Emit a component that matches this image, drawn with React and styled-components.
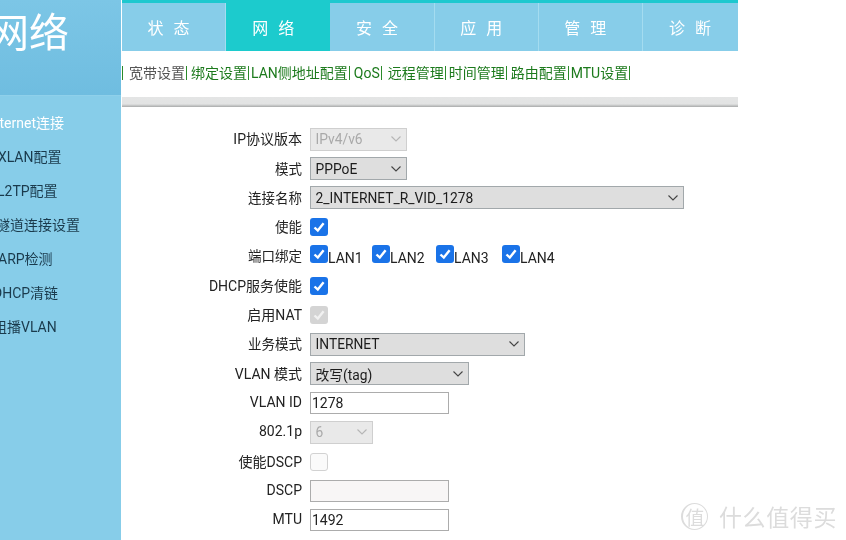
import React from "react"
import styled, { createGlobalStyle } from "styled-components"

const GlobalStyle = createGlobalStyle`
  html, body {
    margin: 0;
    padding: 0;
    background: #fff;
    overflow: hidden;
  }
  body {
    font-family: Roboto, "Noto Sans CJK SC", sans-serif;
  }
`

const Page = styled.div`
  position: relative;
  display: flex;
  width: 846px;
  height: 540px;
  overflow: hidden;
  background: #fff;
  filter: blur(0.3px);
`

const Sidebar = styled.aside`
  flex: 0 0 121px;
  display: flex;
  flex-direction: column;
  background: #87cde9;
  overflow: hidden;
`

const Brand = styled.div`
  height: 96px;
  flex: none;
  box-sizing: border-box;
  padding-top: 3px;
  margin-bottom: 10px;
  background: linear-gradient(180deg, #7cc6e6 0%, #6fbde0 100%);
  border-bottom: 1px solid #8fd0ea;
  color: #fff;
  font-size: 40px;
  line-height: 54px;
  white-space: nowrap;
  text-indent: -11px;
  font-family: "Noto Sans CJK SC", sans-serif;
`

const SideItem = styled.div`
  height: 34px;
  line-height: 34px;
  font-size: 14px;
  white-space: nowrap;
  color: ${(p) => (p.$active ? "#fff" : "#1a3a4c")};
  margin-left: ${(p) => p.$indent}px;
`

const Main = styled.main`
  flex: 0 0 616px;
  margin-left: 1px;
  display: flex;
  flex-direction: column;
  min-width: 0;
`

const TopNav = styled.nav`
  display: flex;
  height: 48px;
  border-top: 3px solid #1ec8cf;
  background: #87cde9;
`

const Tab = styled.div`
  flex: 0 0 104.2px;
  box-sizing: border-box;
  display: flex;
  align-items: center;
  justify-content: center;
  gap: 10px;
  font-size: 16px;
  padding: 0 10px 1px 0;
  color: #fff;
  background: ${(p) => (p.$active ? "#1ccbcd" : "transparent")};
  border-right: 1px solid #a4dcf0;
  &:last-child {
    border-right: 0;
  }
  ${(p) => p.$active && "margin-top: -3px; padding-top: 3px; height: 51px; border-right: 0;"}
`

const SubNav = styled.div`
  height: 46px;
  display: flex;
  align-items: center;
  padding-bottom: 2px;
  box-sizing: border-box;
  font-size: 14px;
  white-space: nowrap;
`

const SubLink = styled.span`
  color: ${(p) => (p.$active ? "#555" : "#1c7a1c")};
  border-left: 1px solid #2a8a2a;
  padding-left: ${(p) => p.$pad}px;
  padding-right: 1px;
  line-height: 14px;
`

const SubEnd = styled.span`
  border-left: 1px solid #2a8a2a;
  height: 14px;
`

const Divider = styled.div`
  height: 10px;
  background: linear-gradient(180deg, #e4e5e5 0%, #e2e3e3 70%, #a9abab 100%);
`

const Form = styled.form`
  padding-top: 17.6px;
  display: flex;
  flex-direction: column;
`

const Row = styled.div`
  display: flex;
  align-items: center;
  height: 29.3px;
`

const Label = styled.label`
  flex: 0 0 180px;
  text-align: right;
  font-size: ${(p) => (p.$wide ? "14px" : "13.5px")};
  color: #222;
  margin: -2px 8px 0 0;
  white-space: nowrap;
`

const Select = styled.div`
  box-sizing: border-box;
  width: ${(p) => p.$w}px;
  height: 23px;
  display: flex;
  align-items: center;
  justify-content: space-between;
  padding: 0 4px 0 4.5px;
  font-size: 13.8px;
  background: ${(p) => (p.$disabled ? "#e9e9e9" : "#dedede")};
  border: 1px solid ${(p) => (p.$disabled ? "#cfcfcf" : "#a2a8ab")};
  color: ${(p) => (p.$disabled ? "#a9a9a9" : "#1c1c1c")};
  svg {
    flex: none;
  }
`

const TextInput = styled.div`
  box-sizing: border-box;
  width: 139px;
  height: 22px;
  line-height: 20px;
  padding-left: 1px;
  font-size: 14px;
  color: #222;
  background: ${(p) => (p.$disabled ? "#f8f6f6" : "#fff")};
  border: 1.5px solid #acacac;
`

const Check = styled.span`
  flex: none;
  box-sizing: border-box;
  width: 18px;
  height: 18px;
  border-radius: 3px;
  display: inline-flex;
  align-items: center;
  justify-content: center;
  background: ${(p) => (p.$state === "on" ? "#1a73e8" : p.$state === "locked" ? "#d4d4d4" : "#fafafa")};
  border: ${(p) => (p.$state === "off" ? "1px solid #d2d2d2" : "0")};
`

const Ports = styled.div`
  display: flex;
`

const Port = styled.span`
  display: inline-flex;
  align-items: flex-start;
  width: ${(p) => p.$w}px;
  font-size: 14px;
  line-height: 18px;
  color: #222;
  span + span {
    margin-top: 4px;
  }
`

const Watermark = styled.div`
  position: absolute;
  left: 681px;
  top: 499px;
  display: flex;
  align-items: center;
  gap: 11px;
  font-size: 23px;
  letter-spacing: 0.6px;
  color: #dcdcdc;
`

const WatermarkBadge = styled.span`
  width: 27px;
  height: 27px;
  box-sizing: border-box;
  border: 1px solid #dcdcdc;
  border-left-width: 2px;
  border-radius: 50%;
  display: flex;
  align-items: center;
  justify-content: center;
  font-size: 19px;
  letter-spacing: 0;
`

const Chevron = ({ color = "#444" }) => (
  <svg width="12" height="8" viewBox="0 0 12 8" fill="none" stroke={color} strokeWidth="1.1">
    <path d="M1.5 1.5 6 6l4.5-4.5" />
  </svg>
)

const Tick = ({ color = "#fff" }) => (
  <svg width="14" height="14" viewBox="0 0 14 14" fill="none" stroke={color} strokeWidth="2.4">
    <path d="M2.5 7.5 5.8 10.6 11.6 3.2" />
  </svg>
)

const Box = ({ state = "on" }) => (
  <Check $state={state}>
    {state === "on" && <Tick />}
    {state === "locked" && <Tick color="#f1f1f1" />}
  </Check>
)

const Dropdown = ({ w, disabled, children }) => (
  <Select $w={w} $disabled={disabled}>
    <span>{children}</span>
    <Chevron color={disabled ? "#b5b5b5" : "#444"} />
  </Select>
)

const tabs = [
  ["状", "态"],
  ["网", "络"],
  ["安", "全"],
  ["应", "用"],
  ["管", "理"],
  ["诊", "断"],
]

const subLinks = [
  ["宽带设置", 6],
  ["绑定设置", 4],
  ["LAN侧地址配置", 2],
  ["QoS", 4],
  ["远程管理", 6],
  ["时间管理", 3],
  ["路由配置", 4],
  ["MTU设置", 2],
]

const sideItems = [
  ["Internet连接", -12, true],
  ["VXLAN配置", -11],
  ["L2TP配置", -3],
  ["隧道连接设置", -4],
  ["ARP检测", -2],
  ["DHCP清链", -7],
  ["组播VLAN", -7],
]

const ports = [
  ["LAN1", 62],
  ["LAN2", 64],
  ["LAN3", 66],
  ["LAN4", 60],
]

export default function App() {
  return (
    <Page>
      <GlobalStyle />
      <Sidebar>
        <Brand>网络</Brand>
        {sideItems.map(([name, indent, active]) => (
          <SideItem key={name} $indent={indent} $active={active}>
            {name}
          </SideItem>
        ))}
      </Sidebar>
      <Main>
        <TopNav>
          {tabs.map(([a, b], i) => (
            <Tab key={a} $active={i === 1}>
              <span>{a}</span>
              <span>{b}</span>
            </Tab>
          ))}
        </TopNav>
        <SubNav>
          {subLinks.map(([name, pad], i) => (
            <SubLink key={name} $pad={pad} $active={i === 0}>
              {name}
            </SubLink>
          ))}
          <SubEnd />
        </SubNav>
        <Divider />
        <Form>
          <Row>
            <Label $wide>IP协议版本</Label>
            <Dropdown w={97} disabled>IPv4/v6</Dropdown>
          </Row>
          <Row>
            <Label>模式</Label>
            <Dropdown w={97}>PPPoE</Dropdown>
          </Row>
          <Row>
            <Label>连接名称</Label>
            <Dropdown w={374}>2_INTERNET_R_VID_1278</Dropdown>
          </Row>
          <Row>
            <Label>使能</Label>
            <Box />
          </Row>
          <Row>
            <Label>端口绑定</Label>
            <Ports>
              {ports.map(([lan, w]) => (
                <Port key={lan} $w={w}>
                  <Box />
                  <span>{lan}</span>
                </Port>
              ))}
            </Ports>
          </Row>
          <Row>
            <Label $wide>DHCP服务使能</Label>
            <Box />
          </Row>
          <Row>
            <Label $wide>启用NAT</Label>
            <Box state="locked" />
          </Row>
          <Row>
            <Label>业务模式</Label>
            <Dropdown w={215}>INTERNET</Dropdown>
          </Row>
          <Row>
            <Label $wide>VLAN 模式</Label>
            <Dropdown w={159}>改写(tag)</Dropdown>
          </Row>
          <Row>
            <Label $wide>VLAN ID</Label>
            <TextInput>1278</TextInput>
          </Row>
          <Row>
            <Label $wide>802.1p</Label>
            <Dropdown w={63} disabled>6</Dropdown>
          </Row>
          <Row>
            <Label $wide>使能DSCP</Label>
            <Box state="off" />
          </Row>
          <Row>
            <Label $wide>DSCP</Label>
            <TextInput $disabled />
          </Row>
          <Row>
            <Label $wide>MTU</Label>
            <TextInput>1492</TextInput>
          </Row>
        </Form>
      </Main>
      <Watermark>
        <WatermarkBadge>值</WatermarkBadge>
        <span>什么值得买</span>
      </Watermark>
    </Page>
  )
}
